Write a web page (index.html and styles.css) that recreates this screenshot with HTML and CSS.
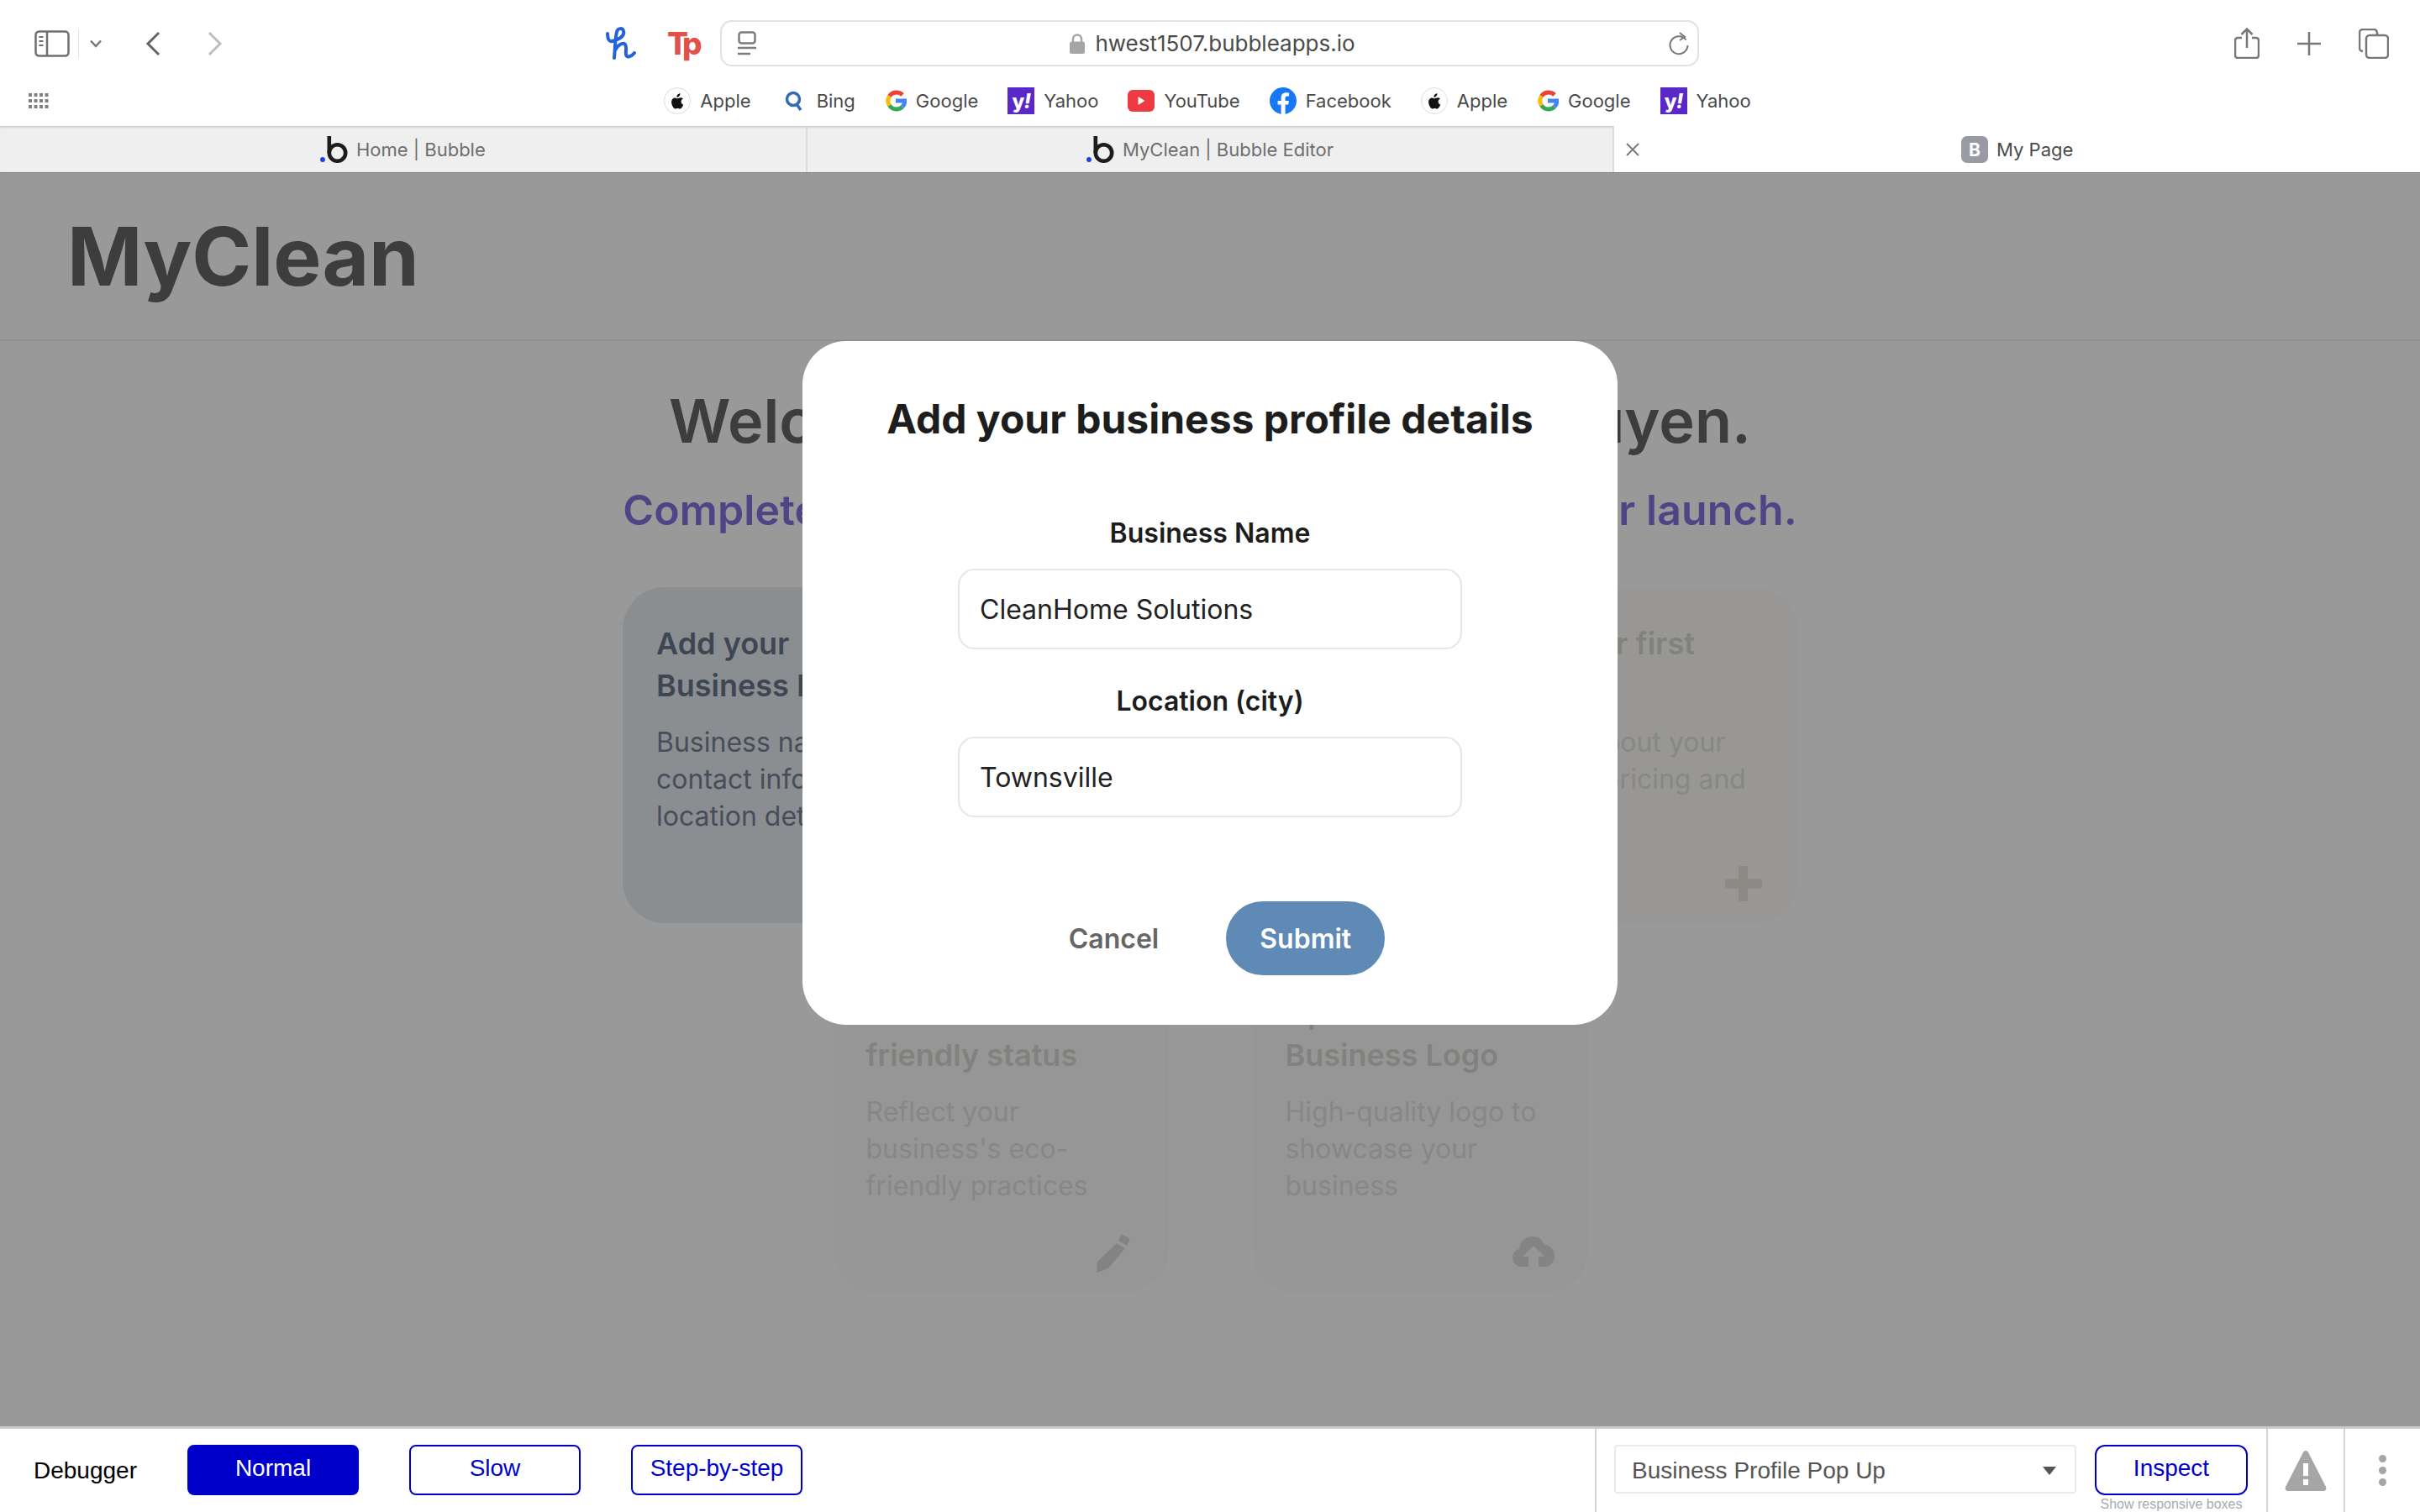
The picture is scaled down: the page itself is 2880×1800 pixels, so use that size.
FILE: index.html
```html
<!DOCTYPE html>
<html lang="en">
<head>
    <meta charset="UTF-8">
    <title>My Page</title>
    <link rel="stylesheet" href="styles.css">
</head>
<body>
    <svg class="defs" width="0" height="0">
        <symbol id="apple" viewBox="0 0 32 32">
            <circle cx="16" cy="16" r="15.500" fill="#fff" stroke="#dcdcdc"/>
            <path fill="#111" d="M19.4 7.2c.1 1.300-.4 2.400-1.100 3.200-.7.800-1.800 1.400-2.900 1.300-.1-1.200.5-2.400 1.100-3.100.8-.8 2-1.400 2.900-1.400zM22.800 13.400c-1.600 1-2.200 2.200-2.200 3.600 0 1.700 1 3 2.600 3.700-.6 1.700-2.300 4.900-4 4.900-1 0-1.500-.6-2.700-.6s-1.800.6-2.700.6c-2.200 0-4.700-4.400-4.700-8 0-3.300 2.200-5.200 4.200-5.200 1.300 0 2.300.8 3.100.8.800 0 1.900-.9 3.400-.9.600 0 2.500.1 3.800 2z"/>
        </symbol>
        <symbol id="google" viewBox="0 0 26 32">
            <g fill="none" stroke-width="5">
                <path stroke="#ea4335" d="M21 9a10 10 0 0 0-15.500 1.500"/>
                <path stroke="#fbbc05" d="M5.500 10.500a10 10 0 0 0 0 11"/>
                <path stroke="#34a853" d="M5.500 21.500A10 10 0 0 0 21 23"/>
                <path stroke="#4285f4" d="M21 23c2-2 2.800-4 2.800-7H13"/>
            </g>
        </symbol>
        <symbol id="bubble" viewBox="0 0 33 32">
            <circle cx="3" cy="28" r="2.900" fill="#1d3fe8"/>
            <circle cx="20.500" cy="20" r="9.700" fill="none" stroke="#1c1c1c" stroke-width="4.600"/>
            <rect x="8.500" y="0" width="4.600" height="20" fill="#1c1c1c"/>
        </symbol>
    </svg>

    <div class="toolbar">
        <div class="tool-left">
            <svg class="ic-sidebar" width="42" height="32" viewBox="0 0 42 32" fill="none" stroke="#6f6f6f" stroke-width="2.500">
                <rect x="1.500" y="1.500" width="39" height="29" rx="4"/>
                <path d="M15 1.500v29"/>
                <path d="M5.500 8h5M5.500 13h5M5.500 18h5" stroke-width="2"/>
            </svg>
            <span class="tool-sep"></span>
            <svg class="ic-chev" width="16" height="10" viewBox="0 0 16 10" fill="none" stroke="#777" stroke-width="2.500"><path d="M2 1.500l6 6.500 6-6.500"/></svg>
            <svg class="ic-back" width="18" height="30" viewBox="0 0 18 30" fill="none" stroke="#666" stroke-width="3"><path d="M16 2L3 15l13 13"/></svg>
            <svg class="ic-fwd" width="18" height="30" viewBox="0 0 18 30" fill="none" stroke="#bdbdbd" stroke-width="3"><path d="M2 2l13 13L2 28"/></svg>
        </div>
        <div class="tool-ext">
            <svg width="38" height="40" viewBox="0 0 38 40" fill="none" stroke="#2563dc" stroke-width="4" stroke-linecap="round"><path d="M3 8C3 14 5 18 8 17C14 16 24 12 22 5C21 1 15 1 14 6C12 14 12 26 11 37M12.500 27C15 22 20 19 23 20C27 22 24 30 25 33C26 37 31 36 35 31"/></svg>
            <span class="ext-tp">Tp</span>
        </div>
        <div class="addr">
            <svg class="ic-reader" width="22" height="30" viewBox="0 0 22 30" fill="none" stroke="#7c7c7c" stroke-width="2.500"><rect x="1.500" y="1.500" width="19" height="13" rx="3"/><path d="M0 20h22M0 27h15"/></svg>
            <div class="addr-mid">
                <svg width="18" height="24" viewBox="0 0 18 24"><path fill="none" stroke="#a5a5a5" stroke-width="2.500" d="M4 11V6.500a5 5 0 0 1 10 0V11"/><rect y="9.500" width="18" height="14.500" rx="2.500" fill="#a5a5a5"/></svg>
                <span>hwest1507.bubbleapps.io</span>
            </div>
            <svg class="ic-reload" width="24" height="28" viewBox="0 0 24 28" fill="none" stroke="#777" stroke-width="2"><path d="M20.500 9.500A10.500 10.500 0 1 0 22.500 16"/><path d="M13 1l6 5-6 4" /></svg>
        </div>
        <div class="tool-right">
            <svg width="30" height="37" viewBox="0 0 30 37" fill="none" stroke="#777" stroke-width="2.500"><path d="M9 12H4a3 3 0 0 0-3 3v18a3 3 0 0 0 3 3h22a3 3 0 0 0 3-3V15a3 3 0 0 0-3-3h-5"/><path d="M15 24V2M8.500 8L15 1.500 21.500 8"/></svg>
            <svg width="30" height="30" viewBox="0 0 30 30" fill="none" stroke="#777" stroke-width="2.500"><path d="M15 1v28M1 15h28"/></svg>
            <svg width="36" height="36" viewBox="0 0 36 36" fill="none" stroke="#777" stroke-width="2.500"><path d="M5 27a4 4 0 0 1-4-4V5a4 4 0 0 1 4-4h13a4 4 0 0 1 4 4v2"/><rect x="9" y="8" width="26" height="27" rx="4"/></svg>
        </div>
    </div>

    <div class="bookmarks">
        <svg class="ic-grid" width="24" height="18" viewBox="0 0 24 18" fill="#808080">
            <path d="M0 0h4v4H0zM6.500 0h4v4h-4zM13 0h4v4h-4zM19.500 0h4v4h-4zM0 7h4v4H0zM6.500 7h4v4h-4zM13 7h4v4h-4zM19.500 7h4v4h-4zM0 14h4v4H0zM6.500 14h4v4h-4zM13 14h4v4h-4zM19.500 14h4v4h-4z"/>
        </svg>
        <a class="bm"><svg width="32" height="32"><use href="#apple"/></svg>Apple</a>
        <a class="bm"><svg width="32" height="32" viewBox="0 0 32 32" fill="none" stroke="#2f6db5" stroke-width="3.500"><circle cx="15" cy="14" r="7.500"/><path d="M19 20l5 7"/></svg>Bing</a>
        <a class="bm"><svg width="26" height="32"><use href="#google"/></svg>Google</a>
        <a class="bm"><span class="fav-yahoo">y<em>!</em></span>Yahoo</a>
        <a class="bm"><svg width="32" height="32" viewBox="0 0 32 32"><rect y="3" width="32" height="26" rx="6" fill="#ee3a42"/><path d="M12.500 11l8 5-8 5z" fill="#fff"/></svg>YouTube</a>
        <a class="bm"><svg width="32" height="32" viewBox="0 0 32 32"><circle cx="16" cy="16" r="16" fill="#1877f2"/><path fill="#fff" d="M22.200 20.600l.7-4.600h-4.400v-3c0-1.300.6-2.500 2.600-2.500h2V6.600s-1.800-.3-3.500-.3c-3.600 0-6 2.200-6 6.200V16h-4v4.600h4V32h5V20.600z"/></svg>Facebook</a>
        <a class="bm"><svg width="32" height="32"><use href="#apple"/></svg>Apple</a>
        <a class="bm"><svg width="26" height="32"><use href="#google"/></svg>Google</a>
        <a class="bm"><span class="fav-yahoo">y<em>!</em></span>Yahoo</a>
    </div>

    <div class="tabs">
        <div class="tab"><svg width="33" height="32"><use href="#bubble"/></svg>Home | Bubble</div>
        <div class="tab"><svg width="33" height="32"><use href="#bubble"/></svg>MyClean | Bubble Editor</div>
        <div class="tab tab-active">
            <svg class="tab-close" width="16" height="16" viewBox="0 0 16 16" stroke="#777" stroke-width="1.800"><path d="M1 1l14 14M15 1L1 15"/></svg>
            <span class="fav-b">B</span>My Page
        </div>
    </div>

    <div class="page">
        <div class="page-head">MyClean</div>
        <div class="page-main">
            <h1 class="welcome">Welcome to MyClean, Hana Nguyen.</h1>
            <h2 class="subhead">Complete these steps to get your business set for launch.</h2>
            <div class="cards">
                <div class="card card-blue">
                    <h3>Add your Business Profile</h3>
                    <p>Business name, contact info and location details</p>
                </div>
                <div class="card card-faded"></div>
                <div class="card card-faded card-warm">
                    <h3>Add your first service</h3>
                    <p>Details about your service, pricing and more</p>
                    <svg class="card-icon icon-plus" width="44" height="42" viewBox="0 0 44 42" fill="#cfcabc"><path d="M16 0h11v15.500h17v11H27V42H16V26.500H0v-11h16z"/></svg>
                </div>
                <div class="card card-faded">
                    <h3>Add eco-<br>friendly status</h3>
                    <p>Reflect your business's eco-friendly practices</p>
                    <svg class="card-icon icon-pencil" width="44" height="46" viewBox="0 0 44 46" fill="#b1b4a8"><path d="M33 0l10 6-4 8-10-6zM27 11l10 6-20 24-14 5 1-13z"/></svg>
                </div>
                <div class="card card-faded">
                    <h3>Upload<br>Business Logo</h3>
                    <p>High-quality logo to showcase your business</p>
                    <svg class="card-icon icon-cloud" width="50" height="36" viewBox="0 0 50 36" fill="#b4b4bc"><path d="M11 36C4 36 0 31 0 25c0-5 3-9 8-10C9 6 16 0 24 0c7 0 12 4 14 10 7 0 12 6 12 13 0 7-5 13-11 13h-8V24h7L25 11 12 24h7v12z"/></svg>
                </div>
            </div>
        </div>

        <div class="overlay">
            <div class="modal">
                <h2 class="modal-title">Add your business profile details</h2>
                <label class="field-label">Business Name</label>
                <input class="field" type="text" value="CleanHome Solutions">
                <label class="field-label">Location (city)</label>
                <input class="field" type="text" value="Townsville">
                <div class="modal-actions">
                    <button class="btn-cancel">Cancel</button>
                    <button class="btn-submit">Submit</button>
                </div>
            </div>
        </div>
    </div>

    <div class="debugger">
        <span class="dbg-label">Debugger</span>
        <button class="dbg-btn dbg-on">Normal</button>
        <button class="dbg-btn">Slow</button>
        <button class="dbg-btn">Step-by-step</button>
        <div class="dbg-right">
            <div class="dbg-select">Business Profile Pop Up<span class="dbg-arrow"></span></div>
            <div class="dbg-inspect">
                <button class="dbg-btn">Inspect</button>
                <span class="dbg-note">Show responsive boxes</span>
            </div>
            <div class="dbg-cell dbg-warn">
                <svg width="50" height="48" viewBox="0 0 50 48"><path fill="#a6a6a6" fill-rule="evenodd" d="M25 0c1.500 0 2.500 1 3 2l21 41c1 2.500 0 5-3 5H4c-3 0-4-2.500-3-5L22 2c.5-1 1.500-2 3-2zM22 15v15h6V15zM22 34v7h6v-7z"/></svg>
            </div>
            <div class="dbg-cell dbg-more"><i></i><i></i><i></i></div>
        </div>
    </div>
</body>
</html>
```

FILE: styles.css
```css
* { box-sizing: border-box; }
html, body { margin: 0; height: 100%; }
body { width: 2880px; height: 1800px; display: flex; flex-direction: column; overflow: hidden; background: #fff; font-family: Inter, "Liberation Sans", sans-serif; }
.defs { position: absolute; }

/* browser chrome */
.toolbar { height: 92px; display: flex; align-items: flex-start; padding-top: 24px; flex: none; }
.tool-left { width: 720px; padding-left: 41px; height: 55px; display: flex; align-items: center; }
.tool-sep { width: 1px; height: 36px; background: #e4e4e4; margin-left: 10px; }
.ic-chev { margin-left: 12px; }
.ic-back { margin-left: 51px; }
.ic-fwd { margin-left: 56px; }
.tool-ext { width: 137px; height: 55px; display: flex; align-items: center; gap: 36px; }
.ext-tp { color: #e2504a; font-size: 37px; font-weight: 800; letter-spacing: -5px; line-height: 1; }
.addr { width: 1165px; height: 55px; border: 2px solid #e2e2e2; border-radius: 14px; display: flex; align-items: center; justify-content: space-between; padding: 0 10px 0 19px; }
.addr-mid { display: flex; align-items: center; gap: 12px; font-size: 26px; color: #4a4a4a; }
.tool-right { margin-left: 637px; height: 55px; display: flex; align-items: center; gap: 44px; }

.bookmarks { height: 58px; display: flex; align-items: center; justify-content: center; gap: 35px; flex: none; position: relative; padding: 0 6px 2px 0; }
.ic-grid { position: absolute; left: 34px; top: 19px; }
.bm { display: flex; align-items: center; gap: 11px; font-size: 22px; color: #4a4a4a; }
.fav-yahoo { width: 32px; height: 32px; background: #5a28c8; color: #fff; font-weight: 800; font-size: 24px; display: flex; align-items: center; justify-content: center; letter-spacing: -1px; }

.tabs { height: 56px; display: flex; flex: none; background: #efefef; box-shadow: inset 0 3px 3px -2px #bbb; border-bottom: 1px solid #808080; }
.tab { flex: 1; display: flex; align-items: center; justify-content: center; gap: 10px; font-size: 22px; color: #6e6e6e; border-right: 2px solid #dcdcdc; padding-top: 1px; }
.tab-active { background: #fff; color: #4a4a4a; border-right: 0; position: relative; }
.tab-close { position: absolute; left: 14px; top: 20px; }
.fav-b { width: 32px; height: 32px; border-radius: 7px; background: #9a9aa4; color: #fff; font-weight: 700; font-size: 21px; display: flex; align-items: center; justify-content: center; }

/* page under the popup */
.page { flex: 1; position: relative; overflow: hidden; background: #fff; }
.page-head { height: 200px; border-bottom: 2px solid #f0f0f0; padding-left: 80px; font-size: 96px; font-weight: 700; line-height: 198px; color: #666; }
.page-main { display: flex; flex-direction: column; align-items: center; }
.welcome { margin: 52px 0 0; font-size: 72px; line-height: 86px; font-weight: 600; color: #666; word-spacing: 4px; white-space: nowrap; }
.subhead { margin: 33px 0 0; font-size: 50px; line-height: 60px; font-weight: 600; color: #8373e0; white-space: nowrap; letter-spacing: .15px; }
.cards { width: 1398px; margin-top: 62px; display: flex; flex-wrap: wrap; justify-content: center; gap: 40px 99px; }
.card { width: 400px; height: 400px; border-radius: 50px; padding: 42px 40px; position: relative; }
.card h3 { margin: 0; font-size: 36px; line-height: 50px; font-weight: 600; }
.card p { margin: 21px 0 0; font-size: 32px; line-height: 44px; font-weight: 400; }
.card-blue { background: #e7edf2; color: #68758a; }
.card-blue p { color: #778195; }
.card-faded { background: #fbfbfb; color: #a8a8a0; opacity: .85; }
.card-faded h3 { color: #d2d2cc; }
.card-faded p { color: #dcdcd8; }
.card-warm { background: #fffcf7; }
.card-icon { position: absolute; opacity: .5; }
.icon-plus { right: 42px; bottom: 26px; }
.icon-pencil { right: 45px; bottom: 24px; }
.icon-cloud { right: 40px; bottom: 31px; }

.overlay { position: absolute; inset: 0; background: rgba(0,0,0,.4); display: flex; justify-content: center; align-items: flex-start; padding-top: 200px; }

/* popup */
.modal { width: 970px; height: 814px; background: #fff; border-radius: 52px; display: flex; flex-direction: column; align-items: center; padding-top: 61px; }
.modal-title { margin: 0 0 84px; font-size: 48px; line-height: 64px; font-weight: 700; color: #1d1d1d; }
.field-label { font-size: 32px; line-height: 40px; font-weight: 600; color: #1d1d1d; margin-bottom: 22px; }
.field { width: 600px; height: 96px; border: 2px solid #e5e7eb; border-radius: 20px; padding: 0 24px; font-family: inherit; font-size: 32px; color: #222; margin-bottom: 42px; outline: none; }
.modal-actions { display: flex; align-items: center; gap: 80px; margin-top: 58px; padding-left: 40px; }
.btn-cancel { border: 0; background: none; padding: 0; font-family: inherit; font-size: 32px; font-weight: 600; color: #666; }
.btn-submit { width: 189px; height: 88px; border: 0; border-radius: 44px; background: #5f8ab5; color: #fff; font-family: inherit; font-size: 32px; font-weight: 600; }

/* debugger */
.debugger { height: 102px; flex: none; border-top: 3px solid #ccc; display: flex; align-items: flex-start; padding: 19px 0 0 40px; font-family: "Liberation Sans", Arial, sans-serif; background: #fff; }
.dbg-label { font-size: 28px; line-height: 62px; width: 183px; color: #000; }
.dbg-btn { width: 204px; height: 60px; margin-right: 60px; background: #fff; color: #0000cc; border: 2px solid #0000cc; border-radius: 8px; font-family: inherit; font-size: 28px; padding: 0 0 4px; }
.dbg-on { background: #0000cc; color: #fff; }
.dbg-right { margin-left: auto; display: flex; align-self: stretch; margin-top: -19px; border-left: 2px solid #d4d4d4; padding-left: 21px; }
.dbg-select { width: 550px; height: 58px; margin-top: 19px; border: 2px solid #eaeaea; border-radius: 4px; padding-left: 19px; font-size: 28px; line-height: 58px; color: #555; position: relative; }
.dbg-arrow { position: absolute; right: 22px; top: 24px; border: 8px solid transparent; border-top: 10px solid #555; border-bottom: 0; }
.dbg-inspect { width: 182px; margin: 19px 22px 0 22px; display: flex; flex-direction: column; align-items: center; }
.dbg-inspect .dbg-btn { width: 182px; margin: 0; border-radius: 12px; flex: none; }
.dbg-note { font-size: 16px; line-height: 18px; color: #a3abb3; white-space: nowrap; margin-top: 2px; }
.dbg-cell { border-left: 2px solid #d4d4d4; display: flex; align-items: center; justify-content: center; }
.dbg-warn { width: 92px; }
.dbg-more { width: 91px; flex-direction: column; gap: 5px; }
.dbg-more i { width: 9px; height: 9px; border-radius: 50%; background: #a6a6a6; }
```
